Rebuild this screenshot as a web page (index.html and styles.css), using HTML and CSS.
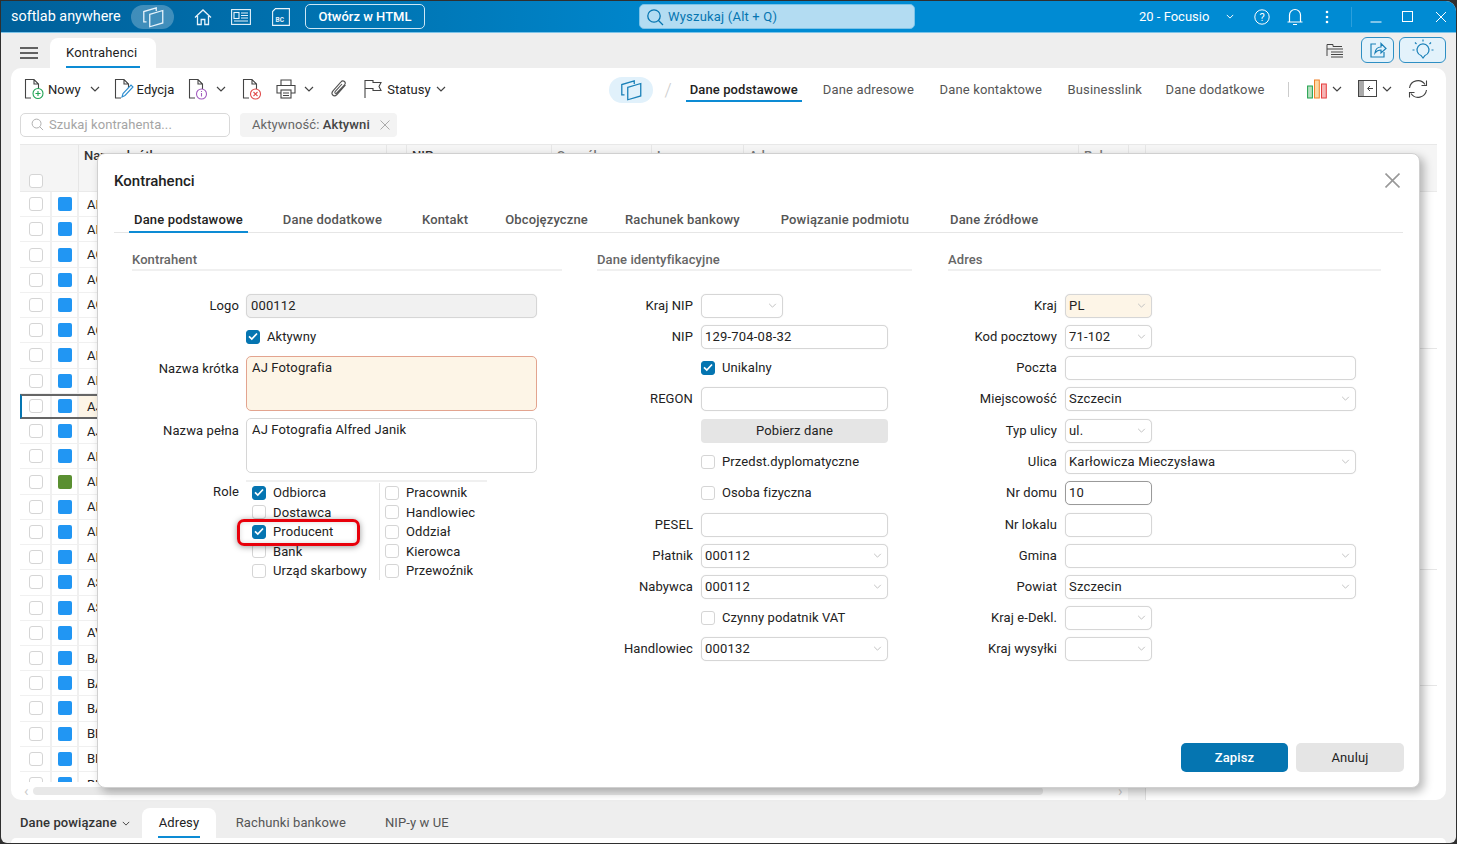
FILE: index.html
```html
<!DOCTYPE html>
<html lang="pl">
<head>
<meta charset="utf-8">
<title>Kontrahenci</title>
<link rel="stylesheet" href="styles.css">
</head>
<body>
<svg class="defs" width="0" height="0">
  <symbol id="chev" viewBox="0 0 10 6"><path d="M1 1l4 4 4-4" fill="none" stroke="currentColor" stroke-width="1.2"/></symbol>
  <symbol id="stack" viewBox="0 0 24 24"><g fill="none" stroke="currentColor" stroke-width="1.2"><path d="M9 9.500L21 6v11.500L9 21z"/><path d="M6 16.500H3.500V7L15 3.500V6.500"/></g></symbol>
  <symbol id="check" viewBox="0 0 14 14"><path d="M3 7.300l2.800 2.700L11 4.500" fill="none" stroke="#fff" stroke-width="1.700"/></symbol>
  <symbol id="doc" viewBox="0 0 20 22"><path d="M7 20H1.500V1.500H10L14.500 6V11M10 1.500V6h4.500" fill="none" stroke="#444" stroke-width="1.100"/></symbol>
</svg>
<div class="window">
  <header class="titlebar">
    <span class="brand">softlab anywhere</span>
    <span class="pill-dark"><svg class="stack-ico"><use href="#stack"/></svg></span>
    <svg class="tb-home" viewBox="0 0 20 20" width="20" height="20"><path d="M2 10.500L10 3l8 7.500M4.500 9v8.500h3.700v-5h3.600v5h3.700V9" fill="none" stroke="#e6f3fb" stroke-width="1.300"/></svg>
    <svg class="tb-news" viewBox="0 0 20 16" width="20" height="16"><g fill="none" stroke="#e6f3fb" stroke-width="1.100"><rect x=".6" y=".6" width="18.800" height="14.800"/><rect x="3" y="3.500" width="5" height="6"/><path d="M10 4h7M10 6.500h7M10 9h7M3 12h14"/></g></svg>
    <svg class="tb-bc" viewBox="0 0 18 18" width="18" height="18"><path d="M.6 3.500L3.500.6h13.900v16.800H.6z" fill="none" stroke="#e6f3fb" stroke-width="1.100"/><text x="3.500" y="13.500" class="bc-text">BC</text></svg>
    <button class="btn-html">Otwórz w HTML</button>
    <div class="global-search">
      <svg viewBox="0 0 18 18" width="18" height="18"><circle cx="8" cy="8" r="6.200" fill="none" stroke="#0575b1" stroke-width="1.300"/><path d="M12.500 12.500l4.500 4.500" stroke="#0575b1" stroke-width="1.300"/></svg>
      <span>Wyszukaj (Alt + Q)</span>
    </div>
    <span class="company">20 - Focusio</span>
    <svg class="tb-chev"><use href="#chev"/></svg>
    <svg class="tb-help" viewBox="0 0 16 16" width="16" height="16"><circle cx="8" cy="8" r="7.200" fill="none" stroke="#fff" stroke-width="1"/><text x="8" y="12" class="help-text">?</text></svg>
    <svg class="tb-bell" viewBox="0 0 16 18" width="16" height="18"><path d="M2.500 13.500V7a5.500 5.500 0 0111 0v6.500M.5 14h15M6 16.500h4" fill="none" stroke="#fff" stroke-width="1.200"/></svg>
    <svg class="tb-dots" viewBox="0 0 4 14" width="4" height="14"><circle cx="2" cy="2" r="1.300" fill="#fff"/><circle cx="2" cy="7" r="1.300" fill="#fff"/><circle cx="2" cy="12" r="1.300" fill="#fff"/></svg>
    <span class="tb-sep"></span>
    <svg class="tb-min" viewBox="0 0 12 12" width="12" height="12"><path d="M.5 11h11" stroke="#fff" stroke-width="1"/></svg>
    <svg class="tb-max" viewBox="0 0 12 12" width="12" height="12"><rect x=".5" y=".5" width="10" height="10" fill="none" stroke="#fff"/></svg>
    <svg class="tb-close" viewBox="0 0 12 12" width="12" height="12"><path d="M1 1l10 10M11 1L1 11" stroke="#fff" stroke-width="1"/></svg>
  </header>

  <div class="tabstrip">
    <svg class="burger" viewBox="0 0 18 12" width="18" height="12"><path d="M0 1h18M0 6h18M0 11h18" stroke="#333" stroke-width="1.700"/></svg>
    <div class="doc-tab"><span class="doc-tab-label">Kontrahenci</span></div>
    <svg class="strip-list" viewBox="0 0 18 16" width="18" height="16"><path d="M1 .5h6v2h9M1 .5V12M1 5h16M5 8h12M5 10.500h12M5 13h12" fill="none" stroke="#444" stroke-width="1"/></svg>
    <button class="strip-btn strip-share"><svg viewBox="0 0 20 20" width="20" height="20"><path d="M8 4H3v13h13v-5" fill="none" stroke="#1a80b8" stroke-width="1.200"/><path d="M7 13c.5-4 3-6 6-6V3.500l5 5-5 4.500V10c-2.500 0-4.500 1-6 3z" fill="none" stroke="#1a80b8" stroke-width="1.200"/></svg></button>
    <button class="strip-btn strip-bulb"><svg viewBox="0 0 24 24" width="24" height="24"><g fill="none" stroke="#1a80b8" stroke-width="1.200"><path d="M12 20l-2-2.500a6 6 0 114 0z"/><path d="M12 3.500V1.500M5.500 6L4 4.500M18.500 6L20 4.500M3.500 12H1.500M20.500 12h2"/></g></svg></button>
  </div>

  <main class="panel">
    <div class="toolbar">
      <svg class="ti ti-new" viewBox="0 0 20 22" width="20" height="22"><use href="#doc"/><circle cx="14" cy="15.500" r="5" fill="#fff" stroke="#22a355" stroke-width="1.100"/><path d="M14 13v5M11.500 15.500h5" stroke="#22a355" stroke-width="1.100"/></svg>
      <span class="tl">Nowy</span>
      <svg class="chev c-new"><use href="#chev"/></svg>
      <svg class="ti ti-edit" viewBox="0 0 20 22" width="20" height="22"><use href="#doc"/><path d="M8 19l1-3.500L17 7l2 2-8 8.500z" fill="#fff" stroke="#2d8ed0" stroke-width="1.100"/></svg>
      <span class="tl">Edycja</span>
      <svg class="ti ti-info" viewBox="0 0 20 22" width="20" height="22"><use href="#doc"/><circle cx="13.500" cy="16" r="5" fill="#fff" stroke="#a35cc0" stroke-width="1.100"/><path d="M13.500 15v3.500M13.500 13v1" stroke="#a35cc0" stroke-width="1.100"/></svg>
      <svg class="chev c-info"><use href="#chev"/></svg>
      <svg class="ti ti-del" viewBox="0 0 20 22" width="20" height="22"><use href="#doc"/><circle cx="13.500" cy="16" r="5" fill="#fff" stroke="#e04b4b" stroke-width="1.100"/><path d="M11.500 14l4 4M15.500 14l-4 4" stroke="#e04b4b" stroke-width="1.100"/></svg>
      <svg class="ti ti-print" viewBox="0 0 20 20" width="20" height="20"><g fill="none" stroke="#444" stroke-width="1.100"><path d="M5 6V1h10v5M5 14H1V6.500h18V14h-4"/><rect x="5" y="11" width="10" height="8"/><path d="M7 14h6M7 16.500h6"/></g></svg>
      <svg class="chev c-print"><use href="#chev"/></svg>
      <svg class="ti ti-clip" viewBox="0 0 18 20" width="18" height="20"><path d="M15.500 6L7 15.500c-1.500 1.500-3.300 1.500-4.300.5s-.9-2.800.3-4.200l8-9c1-1.200 2.500-1.200 3.500-.3s1 2.300 0 3.500L6.800 14c-.6.600-1.300.6-1.700.2s-.4-1.100.2-1.800L12 5" fill="none" stroke="#555" stroke-width="1.100"/></svg>
      <svg class="ti ti-flag" viewBox="0 0 18 20" width="18" height="20"><path d="M1 19V1.500h8V3.500h8l-2 4 2 4H9V9.500H1" fill="none" stroke="#444" stroke-width="1.100"/></svg>
      <span class="tl">Statusy</span>
      <svg class="chev c-stat"><use href="#chev"/></svg>

      <span class="view-pill"><svg class="stack-ico"><use href="#stack"/></svg></span>
      <span class="slash">/</span>
      <nav class="view-tabs">
        <a class="vt vt-active">Dane podstawowe</a>
        <a class="vt">Dane adresowe</a>
        <a class="vt">Dane kontaktowe</a>
        <a class="vt vt-biz">Businesslink</a>
        <a class="vt">Dane dodatkowe</a>
      </nav>
      <span class="vsep"></span>
      <svg class="ti-chart" viewBox="0 0 20 20" width="20" height="20"><rect x=".6" y="7" width="4.800" height="12" fill="#b7e0c0" stroke="#1fa04c"/><rect x="7.500" y="1" width="4.800" height="18" fill="#fbd9a6" stroke="#f0812a"/><rect x="14.500" y="5" width="4.800" height="14" fill="#f6b4b4" stroke="#e53e3e"/></svg>
      <svg class="chev c-chart"><use href="#chev"/></svg>
      <svg class="ti-pane" viewBox="0 0 20 18" width="20" height="18"><rect x=".5" y=".5" width="18" height="16" fill="#fff" stroke="#444"/><rect x="1" y="1" width="5" height="15" fill="#aaa"/><path d="M15 8.500h-5M12 6l-2.500 2.500L12 11" fill="none" stroke="#444"/></svg>
      <svg class="chev c-pane"><use href="#chev"/></svg>
      <svg class="ti-ref" viewBox="0 0 20 20" width="20" height="20"><g fill="none" stroke="#444" stroke-width="1.100"><path d="M1.500 9a8.500 8.500 0 0115.500-3.500M18.500 11A8.500 8.500 0 013 14.500"/><path d="M18.500 1.500v5h-5M1.500 18.500v-5h5"/></g></svg>
    </div>

    <div class="filters">
      <div class="search">
        <svg viewBox="0 0 14 14" width="13" height="13"><circle cx="6" cy="6" r="4.800" fill="none" stroke="#aaa"/><path d="M9.500 9.500L13 13" stroke="#aaa"/></svg>
        <span>Szukaj kontrahenta...</span>
      </div>
      <div class="chip"><span>Aktywność:&nbsp;<b>Aktywni</b></span><svg viewBox="0 0 10 10" width="10" height="10"><path d="M.5.5l9 9M9.500.5l-9 9" stroke="#aaa"/></svg></div>
    </div>

    <section class="grid">
      <div class="ghead">
        <div class="gh gh-sel"><span class="cb"></span></div>
        <div class="gh gh-name">Nazwa krótka</div>
        <div class="gh gh-sort">▲</div>
        <div class="gh gh-nip">NIP</div>
        <div class="gh gh-spos">Sposób</div>
        <div class="gh gh-logo">Logo</div>
        <div class="gh gh-adr">Adres</div>
        <div class="gh gh-rola">Rola</div>
        <div class="gh gh-x"></div>
        <div class="gh gh-rest"></div>
      </div>
      <div class="gbody">
        <div class="rows">
          <div class="row"><span class="c1"><span class="cb"></span></span><span class="c2"><i class="sq"></i></span><span class="c3">AB</span></div>
          <div class="row"><span class="c1"><span class="cb"></span></span><span class="c2"><i class="sq"></i></span><span class="c3">AD</span></div>
          <div class="row"><span class="c1"><span class="cb"></span></span><span class="c2"><i class="sq"></i></span><span class="c3">AG</span></div>
          <div class="row"><span class="c1"><span class="cb"></span></span><span class="c2"><i class="sq"></i></span><span class="c3">AG</span></div>
          <div class="row"><span class="c1"><span class="cb"></span></span><span class="c2"><i class="sq"></i></span><span class="c3">AG</span></div>
          <div class="row"><span class="c1"><span class="cb"></span></span><span class="c2"><i class="sq"></i></span><span class="c3">AG</span></div>
          <div class="row"><span class="c1"><span class="cb"></span></span><span class="c2"><i class="sq"></i></span><span class="c3">AI</span></div>
          <div class="row"><span class="c1"><span class="cb"></span></span><span class="c2"><i class="sq"></i></span><span class="c3">AI</span></div>
          <div class="row row-sel"><span class="c1"><span class="cb"></span></span><span class="c2"><i class="sq"></i></span><span class="c3">AJ</span></div>
          <div class="row"><span class="c1"><span class="cb"></span></span><span class="c2"><i class="sq"></i></span><span class="c3">AJ</span></div>
          <div class="row"><span class="c1"><span class="cb"></span></span><span class="c2"><i class="sq"></i></span><span class="c3">AK</span></div>
          <div class="row"><span class="c1"><span class="cb"></span></span><span class="c2"><i class="sq sq-green"></i></span><span class="c3">AL</span></div>
          <div class="row"><span class="c1"><span class="cb"></span></span><span class="c2"><i class="sq"></i></span><span class="c3">AN</span></div>
          <div class="row"><span class="c1"><span class="cb"></span></span><span class="c2"><i class="sq"></i></span><span class="c3">AR</span></div>
          <div class="row"><span class="c1"><span class="cb"></span></span><span class="c2"><i class="sq"></i></span><span class="c3">AR</span></div>
          <div class="row"><span class="c1"><span class="cb"></span></span><span class="c2"><i class="sq"></i></span><span class="c3">AS</span></div>
          <div class="row"><span class="c1"><span class="cb"></span></span><span class="c2"><i class="sq"></i></span><span class="c3">AS</span></div>
          <div class="row"><span class="c1"><span class="cb"></span></span><span class="c2"><i class="sq"></i></span><span class="c3">AV</span></div>
          <div class="row"><span class="c1"><span class="cb"></span></span><span class="c2"><i class="sq"></i></span><span class="c3">BA</span></div>
          <div class="row"><span class="c1"><span class="cb"></span></span><span class="c2"><i class="sq"></i></span><span class="c3">BA</span></div>
          <div class="row"><span class="c1"><span class="cb"></span></span><span class="c2"><i class="sq"></i></span><span class="c3">BA</span></div>
          <div class="row"><span class="c1"><span class="cb"></span></span><span class="c2"><i class="sq"></i></span><span class="c3">BE</span></div>
          <div class="row"><span class="c1"><span class="cb"></span></span><span class="c2"><i class="sq"></i></span><span class="c3">BI</span></div>
          <div class="row"><span class="c1"><span class="cb"></span></span><span class="c2"><i class="sq"></i></span><span class="c3">BI</span></div>
        </div>
        <div class="side">
          <div class="side-a"></div>
          <div class="side-b"></div>
          <div class="side-c"></div>
        </div>
      </div>
      <div class="hscroll">
        <span class="hs-arrow">‹</span>
        <span class="hs-thumb"></span>
        <span class="hs-arrow hs-right">›</span>
        <span class="hs-tail"></span>
      </div>
    </section>
  </main>

  <footer class="bottom">
    <span class="bottom-title">Dane powiązane</span>
    <svg class="chev c-bottom"><use href="#chev"/></svg>
    <div class="bt bt-active"><span class="bt-label">Adresy</span></div>
    <div class="bt bt-r">Rachunki bankowe</div>
    <div class="bt bt-n">NIP-y w UE</div>
  </footer>
  <div class="bottom-panel"></div>

  <div class="modal">
    <div class="m-head">
      <h2 class="m-title">Kontrahenci</h2>
      <svg class="m-close" viewBox="0 0 14 14" width="15" height="15"><path d="M.5.500l13 13M13.500.5l-13 13" stroke="#999" stroke-width="1.500"/></svg>
    </div>
    <nav class="m-tabs">
      <a class="mt mt-active">Dane podstawowe</a>
      <a class="mt mt2">Dane dodatkowe</a>
      <a class="mt mt3">Kontakt</a>
      <a class="mt mt4">Obcojęzyczne</a>
      <a class="mt mt5">Rachunek bankowy</a>
      <a class="mt mt6">Powiązanie podmiotu</a>
      <a class="mt mt7">Dane źródłowe</a>
    </nav>
    <div class="m-body">
      <section class="col col1">
        <h3 class="sec">Kontrahent</h3>
        <div class="f"><label>Logo</label><div class="inp inp-ro w-full">000112</div></div>
        <div class="f"><label></label><div class="ck"><span class="cb on"><svg><use href="#check"/></svg></span>Aktywny</div></div>
        <div class="f f-area f-first"><label>Nazwa krótka</label><div class="area area-req">AJ Fotografia</div></div>
        <div class="f f-area"><label>Nazwa pełna</label><div class="area">AJ Fotografia Alfred Janik</div></div>
        <div class="roles-rule"></div>
        <div class="roles">
          <label>Role</label>
          <div class="role-col role-a">
            <div class="rk"><span class="cb on"><svg><use href="#check"/></svg></span>Odbiorca</div>
            <div class="rk"><span class="cb"></span>Dostawca</div>
            <div class="rk"><span class="cb on"><svg><use href="#check"/></svg></span>Producent</div>
            <div class="rk"><span class="cb"></span>Bank</div>
            <div class="rk"><span class="cb"></span>Urząd skarbowy</div>
          </div>
          <div class="role-col role-b">
            <div class="rk"><span class="cb"></span>Pracownik</div>
            <div class="rk"><span class="cb"></span>Handlowiec</div>
            <div class="rk"><span class="cb"></span>Oddział</div>
            <div class="rk"><span class="cb"></span>Kierowca</div>
            <div class="rk"><span class="cb"></span>Przewoźnik</div>
          </div>
          <span class="mark"></span>
        </div>
      </section>

      <section class="col col2">
        <h3 class="sec">Dane identyfikacyjne</h3>
        <div class="f"><label>Kraj NIP</label><div class="inp sel w-s"><svg class="dd"><use href="#chev"/></svg></div></div>
        <div class="f"><label>NIP</label><div class="inp w-full">129-704-08-32</div></div>
        <div class="f"><label></label><div class="ck"><span class="cb on"><svg><use href="#check"/></svg></span>Unikalny</div></div>
        <div class="f"><label>REGON</label><div class="inp w-full"></div></div>
        <div class="f f-gap"><label></label><button class="btn-gray w-full">Pobierz dane</button></div>
        <div class="f"><label></label><div class="ck"><span class="cb"></span>Przedst.dyplomatyczne</div></div>
        <div class="f"><label></label><div class="ck"><span class="cb"></span>Osoba fizyczna</div></div>
        <div class="f f-gap"><label>PESEL</label><div class="inp w-full"></div></div>
        <div class="f"><label>Płatnik</label><div class="inp sel w-full">000112<svg class="dd"><use href="#chev"/></svg></div></div>
        <div class="f"><label>Nabywca</label><div class="inp sel w-full">000112<svg class="dd"><use href="#chev"/></svg></div></div>
        <div class="f"><label></label><div class="ck"><span class="cb"></span>Czynny podatnik VAT</div></div>
        <div class="f"><label>Handlowiec</label><div class="inp sel w-full">000132<svg class="dd"><use href="#chev"/></svg></div></div>
      </section>

      <section class="col col3">
        <h3 class="sec">Adres</h3>
        <div class="f"><label>Kraj</label><div class="inp sel w-s inp-req">PL<svg class="dd"><use href="#chev"/></svg></div></div>
        <div class="f"><label>Kod pocztowy</label><div class="inp sel w-s">71-102<svg class="dd"><use href="#chev"/></svg></div></div>
        <div class="f"><label>Poczta</label><div class="inp w-full"></div></div>
        <div class="f"><label>Miejscowość</label><div class="inp sel w-full">Szczecin<svg class="dd"><use href="#chev"/></svg></div></div>
        <div class="f f-gap"><label>Typ ulicy</label><div class="inp sel w-s">ul.<svg class="dd"><use href="#chev"/></svg></div></div>
        <div class="f"><label>Ulica</label><div class="inp sel w-full">Karłowicza Mieczysława<svg class="dd"><use href="#chev"/></svg></div></div>
        <div class="f"><label>Nr domu</label><div class="inp w-s inp-focus">10</div></div>
        <div class="f f-gap"><label>Nr lokalu</label><div class="inp w-s"></div></div>
        <div class="f"><label>Gmina</label><div class="inp sel w-full"><svg class="dd"><use href="#chev"/></svg></div></div>
        <div class="f"><label>Powiat</label><div class="inp sel w-full">Szczecin<svg class="dd"><use href="#chev"/></svg></div></div>
        <div class="f"><label>Kraj e-Dekl.</label><div class="inp sel w-s"><svg class="dd"><use href="#chev"/></svg></div></div>
        <div class="f"><label>Kraj wysyłki</label><div class="inp sel w-s"><svg class="dd"><use href="#chev"/></svg></div></div>
      </section>
    </div>
    <div class="m-foot">
      <button class="btn-save">Zapisz</button>
      <button class="btn-cancel">Anuluj</button>
    </div>
  </div>
</div>
</body>
</html>
```

FILE: styles.css
```css
* { box-sizing: border-box; }
html, body { margin: 0; height: 100%; overflow: hidden; background: #2f2f2f; }
body { font-family: Roboto, "Liberation Sans", sans-serif; font-size: 13px; color: #222; }
.defs { position: absolute; }
.window { position: relative; width: 1455px; height: 842px; margin: 1px 0 0 1px; background: #eee; border-radius: 0 10px 6px 6px; overflow: hidden; display: flex; flex-direction: column; }
button { font-family: inherit; cursor: default; }
.stack-ico { width: 26px; height: 26px; flex: none; }

/* title bar */
.titlebar { flex: none; height: 32px; display: flex; align-items: center; color: #fff; border-bottom: 1px solid #7cc3e8; background: linear-gradient(90deg, #00609a 0%, #0077b6 28%, #008bd3 50%, #008bd3 100%); }
.brand { margin-left: 10px; font-size: 14.400px; width: 120px; white-space: nowrap; }
.pill-dark { width: 43px; height: 24px; border-radius: 12px; background: rgba(255,255,255,.25); display: flex; align-items: center; justify-content: center; color: #e6f3fb; }
.tb-home { margin-left: 19px; }
.tb-news { margin-left: 18px; }
.tb-bc { margin-left: 21px; }
.bc-text { font: 700 6.500px Roboto, sans-serif; fill: #e6f3fb; }
.help-text { font: 400 11px Roboto, sans-serif; fill: #fff; text-anchor: middle; }
.btn-html { margin-left: 15px; width: 120px; height: 25px; border: 1.500px solid #cde7f5; border-radius: 5px; background: transparent; color: #fff; font-size: 13px; font-weight: 500; padding: 0; }
.global-search { margin-left: 214px; width: 276px; height: 25px; border-radius: 5px; background: #b3dcf2; color: #0575b1; display: flex; align-items: center; gap: 4px; padding-left: 6px; font-size: 13px; letter-spacing: .2px; border: 1px solid #7cc3e8; }
.company { margin-left: 224px; width: 72px; white-space: nowrap; }
.tb-chev { width: 8px; height: 5px; margin-left: 15px; }
.tb-help { margin-left: 20px; }
.tb-bell { margin-left: 17px; }
.tb-dots { margin-left: 22px; }
.tb-sep { width: 1px; height: 20px; margin-left: 22px; background: #2b9fdc; }
.tb-min { margin-left: 18px; }
.tb-max { margin-left: 20px; }
.tb-close { margin-left: 21px; }

/* doc tabs */
.tabstrip { flex: none; height: 35px; display: flex; align-items: flex-start; padding-left: 19px; }
.burger { flex: none; margin-top: 14px; }
.doc-tab { width: 106px; height: 30px; margin-left: 12px; margin-top: 5px; padding: 0 16px; background: #fff; border-radius: 8px 8px 0 0; display: flex; }
.doc-tab-label { height: 30px; width: 74px; line-height: 29px; border-bottom: 2px solid #0d8bd4; font-size: 13px; white-space: nowrap; letter-spacing: .2px; }
.strip-list { margin-left: 1170px; flex: none; margin-top: 11px; }
.strip-btn { padding: 0; height: 26px; margin-top: 4px; border: 1px solid #2e8fc4; border-radius: 6px; background: #e3f2fb; display: flex; align-items: center; justify-content: center; }
.strip-share { width: 33px; margin-left: 17px; }
.strip-bulb { width: 47px; margin-left: 5px; }

/* main panel */
.panel { flex: none; height: 732px; margin: 0 10px; background: #fff; border-radius: 10px; padding: 0 9px; display: flex; flex-direction: column; }
.toolbar { flex: none; height: 42px; display: flex; align-items: center; color: #222; position: relative; }
.tl { font-size: 13px; white-space: nowrap; }
.chev { width: 10px; height: 6px; color: #444; flex: none; }
.ti { flex: none; }
.ti-new { margin-left: 4px; margin-right: 4px; }
.c-new { margin-left: 9px; }
.ti-edit { margin-left: 14px; margin-right: 3px; }
.ti-info { margin-left: 14px; }
.c-info { margin-left: 8px; }
.ti-del { margin-left: 16px; }
.ti-print { margin-left: 14px; }
.c-print { margin-left: 8px; }
.ti-clip { margin-left: 16px; }
.ti-flag { margin-left: 16px; margin-right: 5px; }
.c-stat { margin-left: 5px; }
.view-pill { margin-left: 163px; width: 44px; height: 26px; border-radius: 13px; background: #e1f1fb; color: #1a80b8; display: flex; align-items: center; justify-content: center; margin-top: 2px; flex: none; }
.slash { margin-left: 12px; color: #ccc; font-size: 18px; font-weight: 300; margin-top: 1px; }
.view-tabs { display: flex; align-items: center; margin-left: 14px; margin-top: 4px; }
.vt { color: #555; padding: 0 4px; margin-right: 17.500px; height: 22px; line-height: 20px; white-space: nowrap; letter-spacing: .15px; }
.vt-biz { margin-right: 15.500px; }
.vt-active { color: #222; font-weight: 500; border-bottom: 2px solid #0d8bd4; height: 22px; margin-right: 17px; letter-spacing: .1px; }
.vsep { width: 1px; height: 15px; background: #ccc; margin-left: 2px; }
.ti-chart { margin-left: 18px; flex: none; }
.c-chart { margin-left: 5px; }
.ti-pane { margin-left: 16px; flex: none; }
.c-pane { margin-left: 4px; }
.ti-ref { margin-left: 16px; flex: none; }

.filters { flex: none; height: 24px; margin-top: 3px; display: flex; gap: 10px; }
.search { width: 210px; height: 24px; border: 1px solid #d9d9d9; border-radius: 5px; color: #a5a5a5; display: flex; align-items: center; gap: 5px; padding: 0 0 1px 10px; letter-spacing: .1px; }
.chip { width: 157px; height: 24px; border-radius: 4px; background: #f3f3f3; display: flex; align-items: center; justify-content: space-between; padding: 0 7px 1px 12px; color: #666; letter-spacing: .1px; }
.chip b { font-weight: 500; color: #444; }

/* grid */
.grid { flex: 1; margin-top: 7px; display: flex; flex-direction: column; min-height: 0; }
.ghead { flex: none; height: 48px; display: flex; background: #f5f5f5; border-top: 1px solid #e8e8e8; border-bottom: 1px solid #eaeaea; }
.gh { border-right: 1px solid #e6e6e6; padding: 3px 0 0 5px; font-weight: 500; white-space: nowrap; color: #333; line-height: 15px; flex: none; }
.gh-sel { width: 59px; padding: 0 0 3px 9px; display: flex; align-items: flex-end; }
.gh-name { width: 308px; }
.gh-sort { width: 20px; font-size: 8px; }
.gh-nip { width: 145px; }
.gh-spos { width: 100px; color: #777; }
.gh-logo { width: 92px; color: #777; }
.gh-adr { width: 335px; color: #777; }
.gh-rola { width: 50px; color: #777; }
.gh-x { width: 17px; }
.gh-rest { flex: 1; border-right: 0; }
.gbody { flex: 1; display: flex; min-height: 0; overflow: hidden; }
.rows { width: 1126px; flex: none; }
.row { height: 25.230px; display: flex; border-bottom: 1px solid #f0f0f0; }
.row span { display: flex; align-items: center; }
.c1 { width: 32px; padding-left: 9px; border-right: 2px solid #f0f0f0; flex: none; }
.c2 { width: 27px; padding-left: 6px; border-right: 2px solid #f0f0f0; flex: none; }
.c3 { flex: 1; padding-left: 8px; }
.sq { display: block; width: 14px; height: 14px; border-radius: 2px; background: #2196f3; }
.sq-green { background: #5a8f31; }
.row-sel { border-top: 2px solid #666; border-bottom: 2px solid #666; border-left: 2px solid #0575b1; }
.row-sel .c1 { width: 30px; padding-left: 7px; }
.row-sel .c3 { background: #fdf5e7; }
.cb { display: inline-block; width: 14px; height: 14px; flex: none; border: 1.500px solid #d5d5d5; border-radius: 3px; background: #fff; }
.cb.on { background: #0575b1; border-color: #0575b1; position: relative; }
.cb.on svg { position: absolute; left: -1.500px; top: -1.500px; width: 14px; height: 14px; display: block; }
.side { flex: 1; display: flex; flex-direction: column; border-left: 1px solid #e8e8e8; }
.side-a { height: 157px; border-bottom: 1px solid #e6e6e6; }
.side-b { height: 221px; border-bottom: 1px solid #e6e6e6; }
.side-c { height: 116px; border-bottom: 1px solid #e6e6e6; }
.hscroll { flex: none; height: 18px; display: flex; align-items: center; padding-left: 4px; }
.hs-arrow { color: #ccc; font-size: 15px; width: 9px; line-height: 10px; flex: none; }
.hs-thumb { width: 1010px; height: 8px; border-radius: 4px; background: #e8e8e8; flex: none; }
.hs-right { margin-left: 75px; }
.hs-tail { width: 18px; height: 18px; margin-left: 1px; border-right: 1px solid #e0e0e0; background: #f4f4f4; flex: none; }

/* bottom */
.bottom { flex: none; height: 38px; display: flex; align-items: flex-end; padding-left: 19px; }
.bottom-title { font-weight: 500; color: #333; height: 30px; line-height: 30px; white-space: nowrap; letter-spacing: .1px; }
.c-bottom { margin-left: 5px; align-self: center; margin-top: 8px; width: 8px; height: 5px; }
.bt { height: 30px; line-height: 29px; color: #555; white-space: nowrap; letter-spacing: .1px; }
.bt-active { margin-left: 12px; width: 74px; padding: 0 16px; background: #fff; border-radius: 8px 8px 0 0; color: #222; font-size: 13px; }
.bt-label { display: block; height: 30px; border-bottom: 2px solid #0d8bd4; padding: 0 1px; }
.bt-r { margin-left: 20px; }
.bt-n { margin-left: 39px; }
.bottom-panel { flex: 1; margin: 0 10px; background: #fff; border-radius: 8px 8px 0 0; }

/* modal */
.modal { position: absolute; left: 96px; top: 152px; width: 1323px; height: 635px; background: #fff; border-radius: 8px; border: 1px solid #d0d0d0; box-shadow: 4px 4px 10px rgba(0,0,0,.28); display: flex; flex-direction: column; }
.m-head { flex: none; height: 53px; display: flex; align-items: center; justify-content: space-between; padding: 0 19px 0 16px; }
.m-title { margin: 0; font-size: 15px; font-weight: 500; color: #222; }
.m-close { flex: none; }
.m-tabs { flex: none; height: 26px; margin: 0 16px; display: flex; border-bottom: 1px solid #e6e6e6; }
.mt { height: 26px; line-height: 25px; font-weight: 500; color: #555; white-space: nowrap; letter-spacing: .15px; }
.mt-active { color: #222; margin-left: 15px; padding: 0 5px; border-bottom: 2px solid #0d8bd4; }
.mt2 { margin-left: 35px; }
.mt3 { margin-left: 40px; }
.mt4 { margin-left: 37px; }
.mt5 { margin-left: 37px; }
.mt6 { margin-left: 41px; }
.mt7 { margin-left: 41px; }
.m-body { flex: 1; display: flex; padding: 19px 0 0 34px; }
.col { flex: none; }
.col1 { width: 430px; --lw: 107px; --fw: 291px; }
.col2 { width: 315px; margin-left: 35px; --lw: 96px; --fw: 187px; }
.col3 { width: 433px; margin-left: 36px; --lw: 109px; --fw: 291px; }
.sec { margin: 0 0 19px; height: 19px; font-size: 13px; font-weight: 500; color: #666; border-bottom: 2px solid #f0f0f0; line-height: 15px; letter-spacing: .1px; }
.f { height: 31px; display: flex; align-items: center; gap: 8px; }
.f-gap { margin-top: 1px; }
.f label, .roles label { width: var(--lw); text-align: right; flex: none; white-space: nowrap; color: #222; letter-spacing: .1px; }
.col1 .f { gap: 7px; }
.w-full { width: var(--fw); }
.w-s { width: 87px; }
.col2 .w-s { width: 82px; }
.inp { position: relative; height: 24px; border: 1px solid #d6d6d6; border-radius: 5px; padding-left: 4px; line-height: 22px; background: #fff; letter-spacing: .15px; white-space: nowrap; box-shadow: 0 0 1px #ddd; }
.col2 .inp, .col3 .inp { padding-left: 3px; letter-spacing: .2px; }
.inp-ro { background: #f1f1f1; }
.inp-req { background: #fdf5e7; }
.inp-focus { border-color: #9a9a9a; }
.dd { position: absolute; right: 5px; top: 8px; width: 9px; height: 5px; color: #c2c2c2; }
.ck { display: flex; align-items: center; gap: 7px; letter-spacing: .1px; white-space: nowrap; }
.f-area { height: 62px; align-items: flex-start; }
.f-first { margin-top: 4px; }
.f-area label { padding-top: 5px; }
.area { width: var(--fw); height: 55px; border: 1px solid #d6d6d6; border-radius: 5px; padding: 3px 5px; line-height: 16px; letter-spacing: .15px; }
.area-req { background: #fdf5e7; border-color: #e3a48f; }
.roles-rule { width: 241px; height: 2px; margin-left: 114px; background: #f0f0f0; }
.roles { position: relative; display: flex; margin-top: 1.300px; }
.roles label { line-height: 16px; padding-top: 1px; }
.role-col { width: 134px; padding-left: 6px; flex: none; }
.role-a { margin-left: 7px; border-right: 1px solid #e3e3e3; }
.role-b { padding-left: 5px; }
.rk { height: 19.400px; display: flex; align-items: center; gap: 7px; white-space: nowrap; letter-spacing: .1px; }
.mark { position: absolute; left: 105px; top: 36px; width: 123px; height: 27px; border: 3px solid #e8000b; border-radius: 7px; box-shadow: 0 1px 6px rgba(0,0,0,.4), inset 0 0 5px rgba(0,0,0,.15); }
.btn-gray { height: 24px; border: 0; border-radius: 4px; background: #e5e5e5; color: #222; font-size: 13px; padding: 0; letter-spacing: .15px; }
.m-foot { flex: none; display: flex; justify-content: flex-end; gap: 8px; padding: 0 15px 15px 0; }
.btn-save, .btn-cancel { width: 108px; height: 29px; border: 0; border-radius: 5px; font-size: 13px; padding: 0; letter-spacing: .15px; }
.btn-save { width: 107px; background: #0575b1; color: #fff; font-weight: 500; }
.btn-cancel { background: #e5e5e5; color: #222; }
```
